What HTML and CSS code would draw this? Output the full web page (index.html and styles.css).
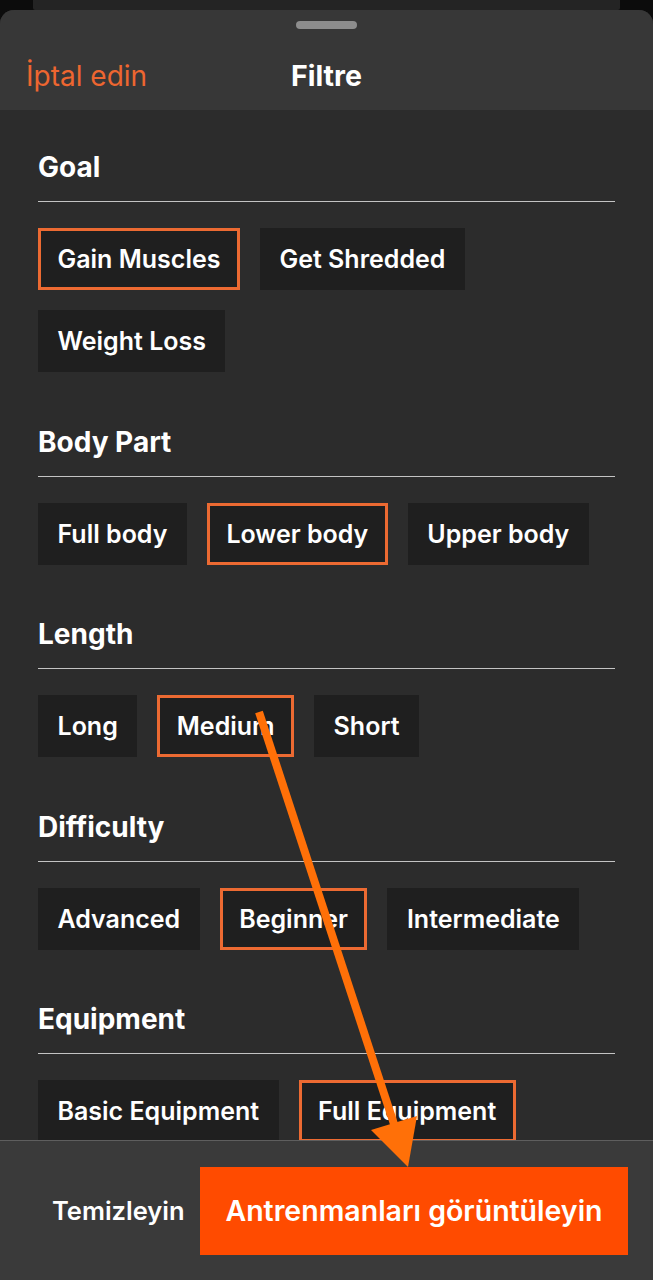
FILE: index.html
```html
<!DOCTYPE html>
<html lang="tr">
<head>
    <meta charset="UTF-8">
    <meta name="viewport" content="width=device-width, initial-scale=1.0">
    <title>Filtre</title>
    <link rel="stylesheet" href="styles.css">
</head>
<body>

    <div class="back-card"></div>

    <div class="sheet">
        <header class="sheet-header">
            <div class="handle"></div>
            <div class="title-row">
                <a href="#" class="cancel">İptal edin</a>
                <h1 class="title">Filtre</h1>
            </div>
        </header>

        <main class="sheet-body">
            <section class="group">
                <h2 class="group-title">Goal</h2>
                <div class="chips">
                    <button class="chip selected">Gain Muscles</button>
                    <button class="chip">Get Shredded</button>
                    <button class="chip">Weight Loss</button>
                </div>
            </section>

            <section class="group">
                <h2 class="group-title">Body Part</h2>
                <div class="chips">
                    <button class="chip">Full body</button>
                    <button class="chip selected">Lower body</button>
                    <button class="chip">Upper body</button>
                </div>
            </section>

            <section class="group">
                <h2 class="group-title">Length</h2>
                <div class="chips">
                    <button class="chip">Long</button>
                    <button class="chip selected">Medium</button>
                    <button class="chip">Short</button>
                </div>
            </section>

            <section class="group">
                <h2 class="group-title">Difficulty</h2>
                <div class="chips">
                    <button class="chip">Advanced</button>
                    <button class="chip selected">Beginner</button>
                    <button class="chip">Intermediate</button>
                </div>
            </section>

            <section class="group">
                <h2 class="group-title">Equipment</h2>
                <div class="chips">
                    <button class="chip">Basic Equipment</button>
                    <button class="chip selected">Full Equipment</button>
                </div>
            </section>
        </main>

        <footer class="sheet-footer">
            <button class="clear-btn">Temizleyin</button>
            <button class="show-btn">Antrenmanları görüntüleyin</button>
        </footer>
    </div>

    <!-- annotation arrow drawn over the screenshot -->
    <svg class="annotation" width="653" height="1280" viewBox="0 0 653 1280">
        <line x1="259" y1="712" x2="394" y2="1124" stroke="#ff7008" stroke-width="8"/>
        <polygon points="371,1130 417,1116 408,1167" fill="#ff7008"/>
    </svg>

</body>
</html>
```

FILE: styles.css
```css
/* Reset */
* {
    margin: 0;
    padding: 0;
    box-sizing: border-box;
    font-family: Inter, "Noto Sans", sans-serif;
}

body {
    background: #0c0c0c;
    width: 653px;
    height: 1280px;
    overflow: hidden;
    position: relative;
    display: flex;
    flex-direction: column;
}

/* Card behind the sheet */
.back-card {
    height: 10px;
    margin: 0 33px;
    background: #242424;
    border-radius: 0 0 2px 2px;
}

/* Bottom sheet */
.sheet {
    flex: 1;
    display: flex;
    flex-direction: column;
    border-radius: 14px 14px 0 0;
    overflow: hidden;
    background: #2c2c2c;
}

.sheet-header {
    height: 100px;
    background: #373737;
    display: flex;
    flex-direction: column;
    align-items: center;
}

.handle {
    width: 61px;
    height: 8px;
    margin-top: 11px;
    border-radius: 4px;
    background: #8d8d8d;
}

.title-row {
    position: relative;
    width: 100%;
    height: 34px;
    margin-top: 30px;
    display: flex;
    align-items: center;
    justify-content: center;
}

.cancel {
    position: absolute;
    left: 26px;
    top: 0;
    line-height: 34px;
    font-size: 28px;
    font-weight: 400;
    color: #ee6630;
    text-decoration: none;
}

.title {
    font-size: 28.5px;
    line-height: 34px;
    font-weight: 700;
    color: #fff;
}

/* Filter groups */
.sheet-body {
    flex: 1;
    overflow: hidden;
    padding: 41px 38px 0;
}

.group + .group {
    margin-top: 53.5px;
}

.group-title {
    font-size: 28px;
    line-height: 32px;
    font-weight: 700;
    color: #fff;
    padding-bottom: 18px;
    border-bottom: 1px solid #c4c4c4;
    margin-bottom: 26px;
}

.chips {
    display: flex;
    flex-wrap: wrap;
    gap: 20px;
}

.chip {
    height: 62px;
    padding: 0 16.5px;
    border: 3px solid transparent;
    background: #1f1f1f;
    color: #fff;
    font-size: 25px;
    font-weight: 600;
    cursor: pointer;
}

.chip.selected {
    border-color: #ec6a32;
}

/* Footer */
.sheet-footer {
    height: 140px;
    flex-shrink: 0;
    border-top: 1px solid #5e5e5e;
    background: #3a3a3a;
    display: flex;
    align-items: center;
    padding: 0 25px 0 52px;
}

.clear-btn {
    background: none;
    border: none;
    color: #fff;
    font-size: 25.5px;
    font-weight: 600;
}

.show-btn {
    margin-left: auto;
    width: 428px;
    height: 88px;
    border: none;
    background: #ff4b00;
    color: #fff;
    font-size: 28.5px;
    font-weight: 600;
}

/* Annotation overlay */
.annotation {
    position: absolute;
    top: 0;
    left: 0;
    pointer-events: none;
}
```
